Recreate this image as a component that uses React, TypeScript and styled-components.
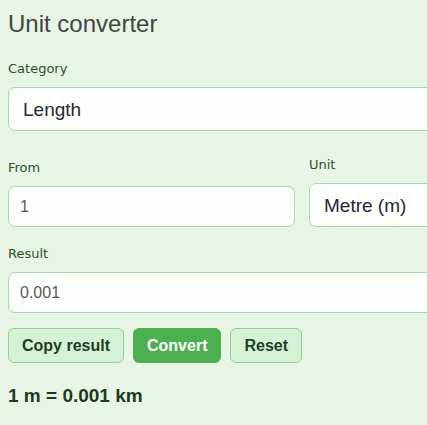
import React, { useState } from "react";
import styled, { createGlobalStyle } from "styled-components";

const Global = createGlobalStyle`
  html, body {
    margin: 0;
    padding: 0;
    overflow: hidden;
    background: #e7f5e5;
  }
  body {
    font-family: "Liberation Sans", Arial, sans-serif;
  }
`;

const Page = styled.div`
  width: 600px;
  padding: 10px 8px 20px;
  box-sizing: border-box;
`;

const Title = styled.h2`
  margin: 0 0 23px;
  font-family: "Liberation Sans", Arial, sans-serif;
  font-size: 24px;
  line-height: 28px;
  font-weight: 400;
  color: #444444;
`;

const Field = styled.div<{ $mb?: number; $grow?: boolean }>`
  display: flex;
  flex-direction: column;
  gap: 10px;
  margin-bottom: ${(p) => p.$mb ?? 0}px;
  ${(p) => (p.$grow ? "flex: 1 1 0; min-width: 0;" : "")}
`;

const Label = styled.label`
  font-family: "DejaVu Sans", Verdana, sans-serif;
  font-size: 13px;
  line-height: 16px;
  color: #2f4f2a;
`;

const Row = styled.div`
  display: flex;
  align-items: flex-end;
  gap: 14px;
  margin-bottom: 19px;
`;

const Select = styled.select`
  appearance: none;
  -webkit-appearance: none;
  width: 100%;
  height: 44px;
  box-sizing: border-box;
  border: 1px solid #a9d8aa;
  border-radius: 7px;
  background: #fbfffa;
  padding: 0 14px;
  font-family: "Liberation Sans", Arial, sans-serif;
  font-size: 19px;
  color: #26263a;
  outline: none;
`;

const Input = styled.input<{ $w?: number }>`
  width: ${(p) => (p.$w ? `${p.$w}px` : "100%")};
  height: 41px;
  box-sizing: border-box;
  border: 1px solid #a9d8aa;
  border-radius: 7px;
  background: #fbfffa;
  padding: 0 11px;
  font-family: "Liberation Sans", Arial, sans-serif;
  font-size: 16px;
  color: #555a60;
  outline: none;
`;

const Buttons = styled.div`
  display: flex;
  gap: 9px;
  margin-top: 15px;
`;

const Button = styled.button<{ $primary?: boolean }>`
  height: 35px;
  box-sizing: border-box;
  padding: 0 13px;
  border-radius: 6px;
  border: 1px solid ${(p) => (p.$primary ? "#4caf50" : "#94cf96")};
  background: ${(p) => (p.$primary ? "#4caf50" : "#d6f0d6")};
  color: ${(p) => (p.$primary ? "#ffffff" : "#1f3f1f")};
  font-family: "Liberation Sans", Arial, sans-serif;
  font-weight: 700;
  font-size: 16px;
  cursor: pointer;
`;

const ResultText = styled.div`
  margin-top: 22px;
  font-family: "Liberation Sans", Arial, sans-serif;
  font-weight: 700;
  font-size: 19px;
  line-height: 22px;
  color: #1d3a1d;
`;

export default function App() {
  const [value, setValue] = useState("1");
  return (
    <>
      <Global />
      <Page>
        <Title>Unit converter</Title>
        <Field $mb={26}>
          <Label>Category</Label>
          <Select defaultValue="length">
            <option value="length">Length</option>
            <option value="mass">Mass</option>
            <option value="temperature">Temperature</option>
          </Select>
        </Field>
        <Row>
          <Field>
            <Label>From</Label>
            <Input $w={287} value={value} onChange={(e) => setValue(e.target.value)} />
          </Field>
          <Field $grow>
            <Label>Unit</Label>
            <Select defaultValue="m">
              <option value="m">Metre (m)</option>
              <option value="km">Kilometre (km)</option>
              <option value="cm">Centimetre (cm)</option>
            </Select>
          </Field>
        </Row>
        <Field>
          <Label>Result</Label>
          <Input value="0.001" readOnly />
        </Field>
        <Buttons>
          <Button>Copy result</Button>
          <Button $primary>Convert</Button>
          <Button>Reset</Button>
        </Buttons>
        <ResultText>1 m = 0.001 km</ResultText>
      </Page>
    </>
  );
}
